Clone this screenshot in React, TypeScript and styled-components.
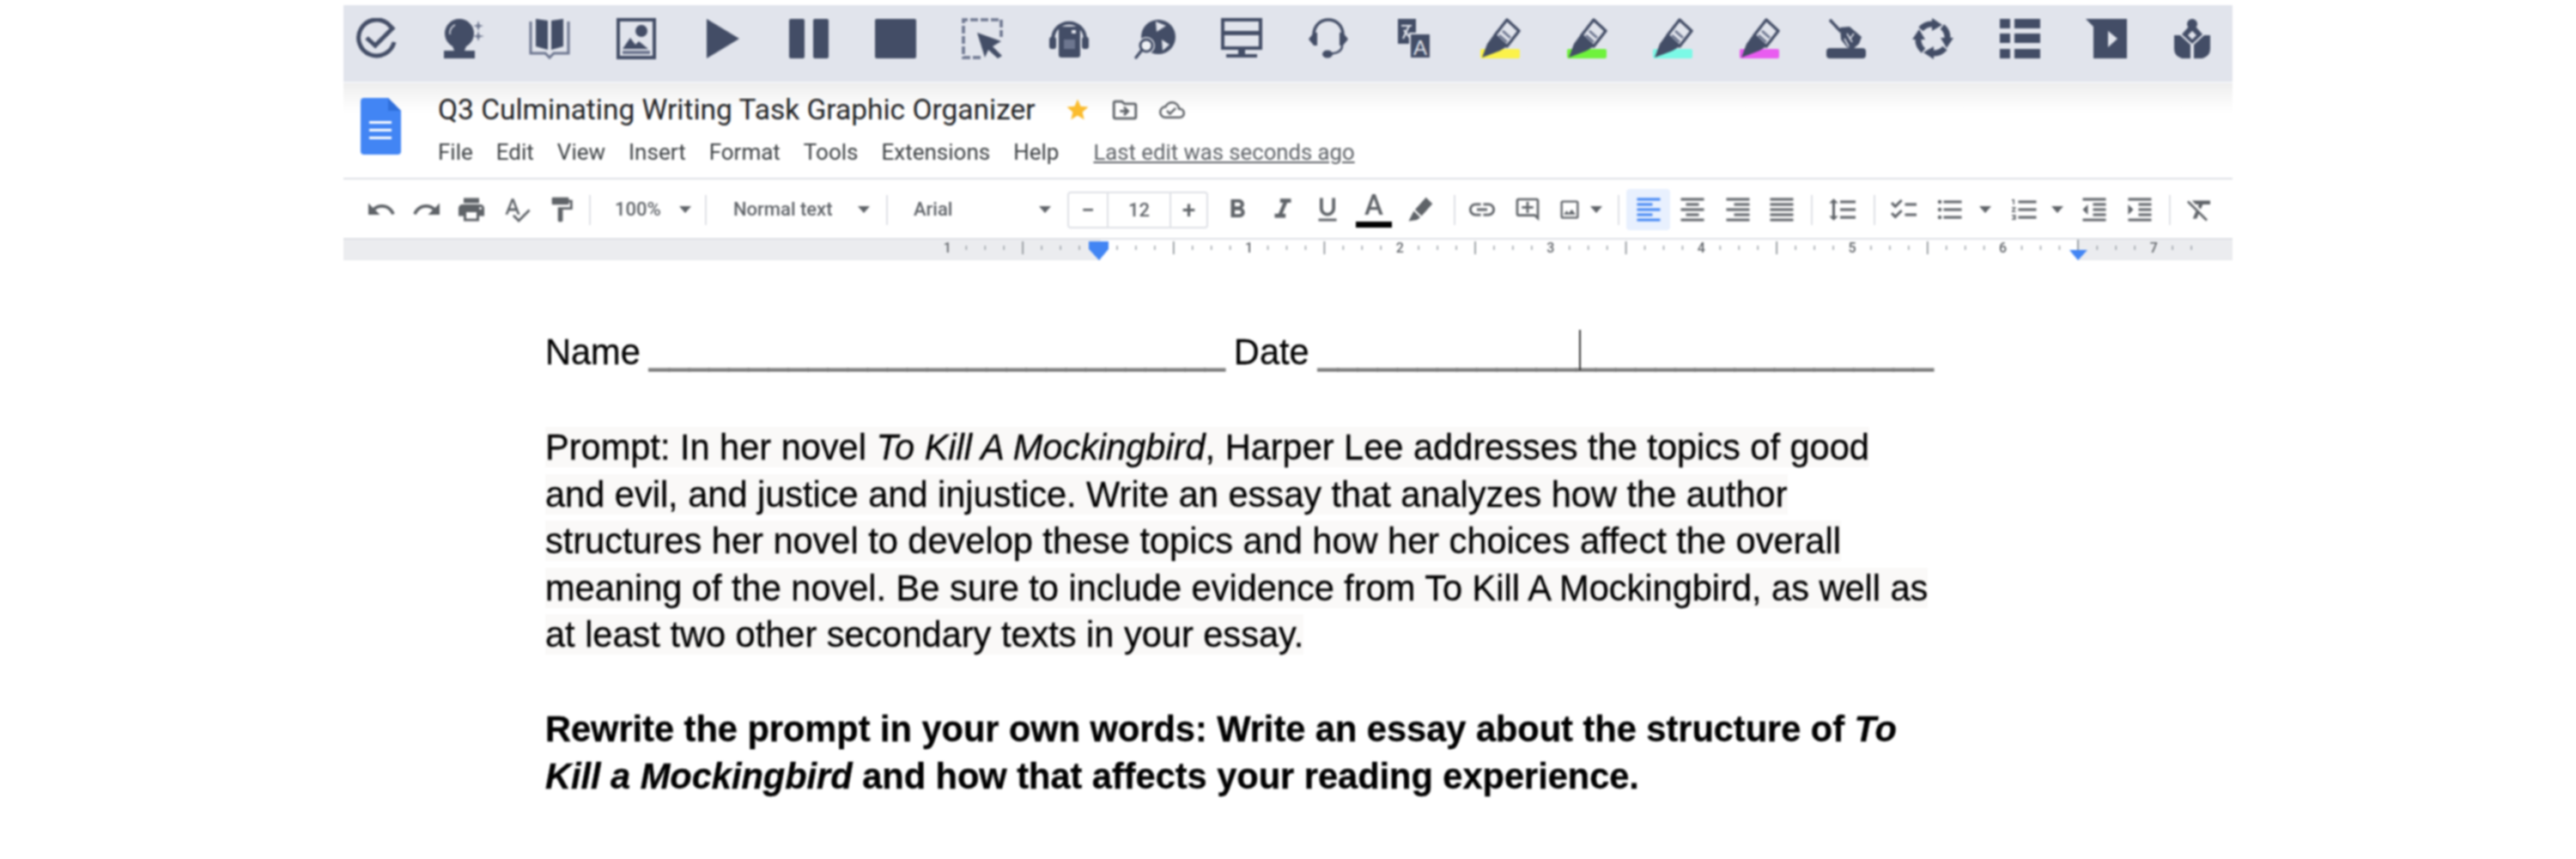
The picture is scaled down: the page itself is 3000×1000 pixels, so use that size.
import React from "react";
import styled, { createGlobalStyle } from "styled-components";
import {
  MdUndo, MdRedo, MdPrint, MdSpellcheck, MdFormatPaint, MdFormatBold, MdFormatItalic,
  MdFormatUnderlined, MdLink, MdOutlineAddComment, MdOutlineImage, MdFormatAlignLeft,
  MdFormatAlignCenter, MdFormatAlignRight, MdFormatAlignJustify, MdFormatLineSpacing,
  MdChecklist, MdFormatListBulleted, MdFormatListNumbered, MdFormatIndentDecrease,
  MdFormatIndentIncrease, MdFormatClear, MdStar, MdOutlineDriveFileMove, MdOutlineCloudDone,
} from "react-icons/md";

const DARK = "#434d66";
const SOFT = "#6d768f";
const BAR = "#e1e4ec";

const GlobalStyle = createGlobalStyle`
  html, body {
    margin: 0;
    background: white;
  }
`;

const Page = styled.div`
  display: flex;
  justify-content: center;
  padding-top: 6px;
  height: 994px;
  filter: blur(0.8px);
`;

const Frame = styled.div`
  width: 2200px;
  display: flex;
  flex-direction: column;
`;

const TopBar = styled.div`
  box-sizing: border-box;
  height: 91px;
  display: flex;
  gap: 52.7px;
  padding: 15px 0 0 15px;
  background: ${BAR};
  border-bottom: 2px solid #f4f5f8;
`;

const Glyph = styled.svg`
  flex: none;
  width: 48px;
  height: 48px;
  fill: ${DARK};
`;

const DocHeader = styled.div`
  box-sizing: border-box;
  height: 110px;
  display: flex;
  gap: 43px;
  padding: 11px 0 0 20px;
  background: linear-gradient(#eeeeee 0, #fafafa 22px, white 34px);
`;

const DocLogo = styled.svg`
  flex: none;
  width: 47px;
  height: 66px;
  margin-top: 6px;
`;

const TitleBlock = styled.div`
  display: flex;
  flex-direction: column;
  gap: 14px;
`;

const TitleRow = styled.div`
  display: flex;
  align-items: center;
  height: 40px;
  color: #5f6368;
`;

const Title = styled.span`
  font: 400 33.5px/40px Roboto, "Liberation Sans", sans-serif;
  color: #202124;
  margin-right: 34px;
`;

const TitleIcon = styled.span<{ $w: number }>`
  display: flex;
  justify-content: center;
  width: ${(p) => p.$w}px;
`;

const MenuRow = styled.div`
  display: flex;
  gap: 27px;
  height: 30px;
  align-items: center;
  font: 400 26px/30px Roboto, "Liberation Sans", sans-serif;
  color: #3c4043;
`;

const LastEdit = styled.span`
  margin-left: 13px;
  font-size: 25.7px;
  color: #5f6368;
  text-decoration: underline;
`;

const Toolbar = styled.div`
  box-sizing: border-box;
  height: 72px;
  display: flex;
  align-items: center;
  padding-left: 18px;
  border-top: 2px solid #dfe1e6;
  color: #5f6368;
`;

const Slot = styled.div<{ $w: number; $ml?: number; $active?: boolean }>`
  flex: none;
  box-sizing: border-box;
  width: ${(p) => p.$w}px;
  height: 48px;
  margin-left: ${(p) => p.$ml || 0}px;
  display: flex;
  align-items: center;
  justify-content: center;
  border-radius: 4px;
  background: ${(p) => (p.$active ? "#e8f0fe" : "transparent")};
  color: ${(p) => (p.$active ? "#4285f4" : "inherit")};
`;

const Sep = styled.div`
  width: 2px;
  height: 35px;
  background: #dfe1e6;
`;

const Caret = styled.div`
  width: 0;
  height: 0;
  border-left: 7px solid transparent;
  border-right: 7px solid transparent;
  border-top: 8px solid #5f6368;
`;

const Label = styled.div<{ $w: number; $pad: number }>`
  flex: none;
  box-sizing: border-box;
  width: ${(p) => p.$w}px;
  padding-left: ${(p) => p.$pad}px;
  font: 500 22px/30px Roboto, "Liberation Sans", sans-serif;
  color: #5f6368;
`;

const SizeBox = styled.div`
  flex: none;
  box-sizing: border-box;
  width: 164px;
  height: 43px;
  margin-left: 9px;
  display: flex;
  align-items: center;
  border: 2px solid #dfe1e6;
  border-radius: 4px;
`;

const SizeCell = styled.div<{ $w: number; $line?: boolean; $big?: boolean }>`
  box-sizing: border-box;
  width: ${(p) => p.$w}px;
  height: 100%;
  display: flex;
  align-items: center;
  justify-content: center;
  border-left: ${(p) => (p.$line ? "2px solid #dfe1e6" : "none")};
  font: 500 ${(p) => (p.$big ? 28 : 22)}px Roboto, "Liberation Sans", sans-serif;
  color: #5f6368;
`;

const ColorA = styled.div`
  display: flex;
  flex-direction: column;
  align-items: center;
  font: 500 33px/30px Roboto, "Liberation Sans", sans-serif;
  color: #5f6368;
  &::after {
    content: "";
    width: 42px;
    height: 7px;
    margin-top: 4px;
    background: black;
  }
`;

const Ruler = styled.div`
  height: 24px;
  border-top: 2px solid #dfe1e6;
  margin-top: -2px;
  background: linear-gradient(
    to right,
    #ebecef 882px,
    white 882px,
    white 2020px,
    #ebecef 2020px
  );
`;

const RulerArt = styled.svg`
  display: block;
  width: 2200px;
  height: 24px;
  overflow: visible;
`;

const RulerNumber = styled.text`
  font: 500 16px Roboto, "Liberation Sans", sans-serif;
  fill: #5f6368;
  text-anchor: middle;
`;

const DocBody = styled.div`
  padding: 80px 0 0 235px;
  font: 400 41.6px/54.6px "Liberation Sans", Arial, sans-serif;
  letter-spacing: -0.03px;
  color: #000;
  -webkit-text-stroke: 0.3px #000;
`;

const NameRow = styled.div`
  position: relative;
  margin-bottom: 56.5px;
  white-space: pre;
  word-spacing: -1px;
`;

const FillRule = styled.span`
  color: #7c7c7c;
  -webkit-text-stroke: 1.4px #7c7c7c;
`;

const Cursor = styled.div`
  position: absolute;
  left: 1204px;
  top: 1px;
  width: 2px;
  height: 47px;
  background: #333;
`;

const PromptLine = styled.div`
  white-space: pre;
`;

const Shade = styled.span`
  background: #faf9f8;
`;

const BoldBlock = styled.div`
  margin-top: 55px;
  font-weight: 700;
  white-space: pre;
`;

const Highlighter = ({ color }: { color: string }) => (
  <Glyph viewBox="0 0 48 48">
    <rect x="0" y="36" width="46" height="11" rx="2" fill={color} />
    <path d="M31 2 L45 15 L31 33 L17 20 Z" fill="none" stroke={DARK} strokeWidth="3.4" strokeLinejoin="round" />
    <path d="M22 20 L31 28 M26 15 L35 23" stroke={SOFT} strokeWidth="3" />
    <path d="M16 19 L31 33 L23 38 L2 46 L8 30 Z" />
  </Glyph>
);

const Ring = () => (
  <Glyph viewBox="0 0 48 48">
    {[0, 90, 180, 270].map((deg) => (
      <g key={deg} transform={`rotate(${deg} 24 24)`}>
        <path d="M10 13 A17 17 0 0 1 24 7" fill="none" stroke={DARK} strokeWidth="7" />
        <path d="M23 0 L35 8 L23 15 Z" />
      </g>
    ))}
  </Glyph>
);

const TopIcons = () => (
  <>
    <Glyph viewBox="0 0 48 48">
      <path d="M44 28 A21 21 0 1 1 36 6 L42 12 L22 32 L12 23" fill="none" stroke={DARK} strokeWidth="5" />
    </Glyph>
    <Glyph viewBox="0 0 48 48">
      <circle cx="19" cy="18" r="17" />
      <path d="M10 30 H28 L25 38 H37 V47 H1 V38 H13 Z" />
      <path d="M8 19 A11 11 0 0 1 14 8" fill="none" stroke={BAR} strokeWidth="1.6" />
      <path d="M41 3 L42.5 8 L47 9 L42.5 10.5 L41 15 L39.5 10.5 L35 9 L39.5 8 Z" fill={SOFT} />
      <path d="M41 15 L42.5 20 L48 21 L42.5 22.5 L41 27 L39.5 22.5 L35 21 L39.5 20 Z" fill={SOFT} />
    </Glyph>
    <Glyph viewBox="0 0 48 48">
      <path d="M2 4 V41 H19 L24 46 L29 41 H46 V4" fill="none" stroke={SOFT} strokeWidth="3" />
      <path d="M8 1 L22 3 V37 L8 33 Z M26 3 L40 1 V33 L26 37 Z" />
    </Glyph>
    <Glyph viewBox="0 0 48 48">
      <rect x="3" y="2" width="42" height="44" fill="none" stroke={DARK} strokeWidth="4" />
      <circle cx="30" cy="15" r="7" />
      <path d="M8 36 L17 23 L23 31 L27 27 L38 36 Z" />
      <rect x="8" y="38" width="32" height="4" fill={SOFT} />
    </Glyph>
    <Glyph viewBox="0 0 48 48">
      <path d="M5 1 L43 24 L5 47 Z" />
    </Glyph>
    <Glyph viewBox="0 0 48 48">
      <rect x="1" y="1" width="18" height="46" rx="2" />
      <rect x="29" y="1" width="18" height="46" rx="2" />
    </Glyph>
    <Glyph viewBox="0 0 48 48">
      <rect x="0" y="1" width="48" height="46" rx="2" />
    </Glyph>
    <Glyph viewBox="0 0 48 48">
      <path d="M22 46 H2 V2 H46 V22" fill="none" stroke={SOFT} strokeWidth="3.6" strokeDasharray="9 3" />
      <path d="M18 17 L46 27 L36 33 L47 44 L42 47 L31 37 L27 46 Z" />
    </Glyph>
    <Glyph viewBox="0 0 48 48">
      <path d="M5 26 C5 -1 43 -1 43 26" fill="none" stroke={DARK} strokeWidth="4" />
      <rect x="1" y="22" width="8" height="14" rx="3" />
      <rect x="39" y="22" width="8" height="14" rx="3" />
      <rect x="12" y="10" width="25" height="36" rx="3" />
      <rect x="18" y="25" width="13" height="11" fill={SOFT} />
      <rect x="27" y="14" width="5" height="4" fill={BAR} />
    </Glyph>
    <Glyph viewBox="0 0 48 48">
      <circle cx="28" cy="22" r="20" />
      <path d="M25 4 L37 9 L26 16 Z M32 25 L41 31 L33 38 Z" fill={BAR} />
      <circle cx="14" cy="32" r="10" fill={BAR} />
      <circle cx="14" cy="32" r="7" fill="#eef0f4" stroke={DARK} strokeWidth="3" />
      <path d="M9 37 L2 46" stroke={DARK} strokeWidth="3.4" strokeLinecap="round" />
    </Glyph>
    <Glyph viewBox="0 0 48 48">
      <rect x="2" y="2" width="44" height="33" fill="none" stroke={DARK} strokeWidth="4" />
      <rect x="4" y="15" width="40" height="5" fill={DARK} />
      <rect x="20" y="35" width="8" height="7" />
      <rect x="6" y="42" width="36" height="4" />
    </Glyph>
    <Glyph viewBox="0 0 48 48">
      <path d="M7 24 V20 C7 -4 41 -4 41 20 V24" fill="none" stroke={DARK} strokeWidth="3.6" />
      <path d="M7 17 H11 V32 H7 L1 24.5 Z M37 17 H41 L47 24.5 L41 32 H37 Z" />
      <path d="M40 32 C40 40 32 41 24 42" fill="none" stroke={DARK} strokeWidth="2.6" />
      <ellipse cx="23" cy="42" rx="6" ry="4.5" />
    </Glyph>
    <Glyph viewBox="0 0 48 48">
      <rect x="5" y="1" width="21" height="29" />
      <path d="M9 9 H21 M18 9 L11 24 M12 14 L20 24" stroke={BAR} strokeWidth="2.2" fill="none" />
      <rect x="19" y="18" width="24" height="29" stroke={BAR} strokeWidth="2" />
      <text x="31" y="43" textAnchor="middle" fontFamily="Liberation Sans" fontSize="24" fill={BAR}>A</text>
    </Glyph>
    <Highlighter color="#fbf24a" />
    <Highlighter color="#6ff23c" />
    <Highlighter color="#7bf9e6" />
    <Highlighter color="#e95cf0" />
    <Glyph viewBox="0 0 48 48">
      <path d="M4 2 L17 16" stroke={DARK} strokeWidth="3.4" />
      <path d="M16 11 L27 10 L41 22 L38 30 L31 36 L24 34 L17 25 Z" />
      <path d="M24 18 L30 28 M32 18 L27 25 M21 24 L26 33" stroke={BAR} strokeWidth="1.6" />
      <rect x="0" y="35" width="46" height="12" rx="4" />
    </Glyph>
    <Ring />
    <Glyph viewBox="0 0 48 48">
      <rect x="1" y="1" width="12" height="11" />
      <rect x="18" y="1" width="30" height="11" />
      <rect x="1" y="18" width="12" height="11" />
      <rect x="18" y="18" width="30" height="11" />
      <rect x="1" y="36" width="12" height="11" />
      <rect x="18" y="36" width="30" height="11" />
    </Glyph>
    <Glyph viewBox="0 0 48 48">
      <path d="M0 1 H48 V47 H9 V10 Z" />
      <path d="M26 15 L37 24 L26 34 Z" fill={BAR} />
    </Glyph>
    <Glyph viewBox="0 0 48 48">
      <circle cx="24" cy="7" r="6" />
      <path d="M19 11 H29 L36 19 L24 30 L12 19 Z" />
      <path d="M24 15 L29 20 L24 25 L19 20 Z" fill={BAR} />
      <path d="M3 20 H10 L22 31 V47 H12 Q3 44 3 36 Z M45 20 H38 L26 31 V47 H36 Q45 44 45 36 Z" />
    </Glyph>
  </>
);

const RulerMarks = () => {
  const inch = 175.6;
  const zero = 879;
  const marks: React.ReactNode[] = [];
  for (let i = -8; i <= 58; i++) {
    const x = zero + (i * inch) / 8;
    if (x > 2199 || i === 0 || i === 52) continue;
    if (i % 8 === 0) {
      marks.push(<RulerNumber key={i} x={x} y={15}>{Math.abs(i / 8)}</RulerNumber>);
    } else if (i % 4 === 0) {
      marks.push(<rect key={i} x={x - 0.75} y={2} width={1.5} height={15} fill="#80868b" />);
    } else {
      marks.push(<rect key={i} x={x - 0.75} y={7} width={1.5} height={5} fill="#9aa0a6" />);
    }
  }
  return (
    <RulerArt viewBox="0 0 2200 24">
      {marks}
      <path d="M868 2 H891 V11 L880 24 L868 11 Z" fill="#4285f4" />
      <rect x="2019" y="0" width="2" height="12" fill="#9aa0a6" />
      <path d="M2010 12 H2031 L2020 24 Z" fill="#4285f4" />
    </RulerArt>
  );
};

const InkIcon = () => (
  <svg width="36" height="36" viewBox="0 0 24 24" fill="currentColor">
    <path d="M16.5 2.5 L21.5 7.5 L13 17 L8 12 Z M7 13 L12 18 L9.5 20 L3 21 L6 15 Z" />
  </svg>
);

const DocToolbar = () => (
  <Toolbar>
    <Slot $w={52}><MdUndo size={36} /></Slot>
    <Slot $w={53}><MdRedo size={36} /></Slot>
    <Slot $w={52}><MdPrint size={36} /></Slot>
    <Slot $w={53}><MdSpellcheck size={34} /></Slot>
    <Slot $w={51}><MdFormatPaint size={34} /></Slot>
    <Slot $w={16}><Sep /></Slot>
    <Label $w={90} $pad={21}>100%</Label>
    <Slot $w={26}><Caret /></Slot>
    <Slot $w={22}><Sep /></Slot>
    <Label $w={157} $pad={21}>Normal text</Label>
    <Slot $w={32}><Caret /></Slot>
    <Slot $w={22}><Sep /></Slot>
    <Label $w={156} $pad={20}>Arial</Label>
    <Slot $w={34}><Caret /></Slot>
    <SizeBox>
      <SizeCell $w={44} $big>−</SizeCell>
      <SizeCell $w={73} $line>12</SizeCell>
      <SizeCell $w={43} $line $big>+</SizeCell>
    </SizeBox>
    <Slot $w={52} $ml={8}><MdFormatBold size={36} /></Slot>
    <Slot $w={53}><MdFormatItalic size={38} /></Slot>
    <Slot $w={52}><MdFormatUnderlined size={36} /></Slot>
    <Slot $w={56}><ColorA>A</ColorA></Slot>
    <Slot $w={52}><InkIcon /></Slot>
    <Slot $w={27}><Sep /></Slot>
    <Slot $w={37}><MdLink size={36} /></Slot>
    <Slot $w={70}><MdOutlineAddComment size={32} /></Slot>
    <Slot $w={28}><MdOutlineImage size={38} /></Slot>
    <Slot $w={34}><Caret /></Slot>
    <Slot $w={18}><Sep /></Slot>
    <Slot $w={51} $active><MdFormatAlignLeft size={36} /></Slot>
    <Slot $w={52}><MdFormatAlignCenter size={36} /></Slot>
    <Slot $w={53}><MdFormatAlignRight size={36} /></Slot>
    <Slot $w={50}><MdFormatAlignJustify size={36} /></Slot>
    <Slot $w={20}><Sep /></Slot>
    <Slot $w={51}><MdFormatLineSpacing size={36} /></Slot>
    <Slot $w={24}><Sep /></Slot>
    <Slot $w={44}><MdChecklist size={36} /></Slot>
    <Slot $w={63}><MdFormatListBulleted size={36} /></Slot>
    <Slot $w={20}><Caret /></Slot>
    <Slot $w={56} $ml={8}><MdFormatListNumbered size={36} /></Slot>
    <Slot $w={20}><Caret /></Slot>
    <Slot $w={66}><MdFormatIndentDecrease size={36} /></Slot>
    <Slot $w={40}><MdFormatIndentIncrease size={36} /></Slot>
    <Slot $w={30}><Sep /></Slot>
    <Slot $w={40}><MdFormatClear size={36} /></Slot>
  </Toolbar>
);

const App = () => (
  <>
    <GlobalStyle />
    <Page>
      <Frame>
        <TopBar>
          <TopIcons />
        </TopBar>
        <DocHeader>
          <DocLogo viewBox="0 0 47 66">
            <path d="M4 0 H32 L47 15 V62 A4 4 0 0 1 43 66 H4 A4 4 0 0 1 0 62 V4 A4 4 0 0 1 4 0 Z" fill="#4285f4" />
            <path d="M32 0 L47 15 H32 Z" fill="#2f6fdb" />
            <path d="M10 27 H36 V30 H10 Z M10 36 H36 V39 H10 Z M10 45 H36 V48 H10 Z" fill="white" />
          </DocLogo>
          <TitleBlock>
            <TitleRow>
              <Title>Q3 Culminating Writing Task Graphic Organizer</Title>
              <TitleIcon $w={30}><MdStar size={36} color="#fbbc2e" /></TitleIcon>
              <TitleIcon $w={80}><MdOutlineDriveFileMove size={34} /></TitleIcon>
              <TitleIcon $w={30}><MdOutlineCloudDone size={34} /></TitleIcon>
            </TitleRow>
            <MenuRow>
              <span>File</span>
              <span>Edit</span>
              <span>View</span>
              <span>Insert</span>
              <span>Format</span>
              <span>Tools</span>
              <span>Extensions</span>
              <span>Help</span>
              <LastEdit>Last edit was seconds ago</LastEdit>
            </MenuRow>
          </TitleBlock>
        </DocHeader>
        <DocToolbar />
        <Ruler>
          <RulerMarks />
        </Ruler>
        <DocBody>
          <NameRow>
            Name <FillRule>_____________________________</FillRule> Date <FillRule>_______________________________</FillRule>
            <Cursor />
          </NameRow>
          <PromptLine>
            <Shade>Prompt: In her novel <i>To Kill A Mockingbird</i>, Harper Lee addresses the topics of good</Shade>
          </PromptLine>
          <PromptLine><Shade>and evil, and justice and injustice. Write an essay that analyzes how the author</Shade></PromptLine>
          <PromptLine><Shade>structures her novel to develop these topics and how her choices affect the overall</Shade></PromptLine>
          <PromptLine><Shade>meaning of the novel. Be sure to include evidence from To Kill A Mockingbird, as well as</Shade></PromptLine>
          <PromptLine><Shade>at least two other secondary texts in your essay.</Shade></PromptLine>
          <BoldBlock>
            Rewrite the prompt in your own words: Write an essay about the structure of <i>To</i>
            <br />
            <i>Kill a Mockingbird</i> and how that affects your reading experience.
          </BoldBlock>
        </DocBody>
      </Frame>
    </Page>
  </>
);

export default App;
